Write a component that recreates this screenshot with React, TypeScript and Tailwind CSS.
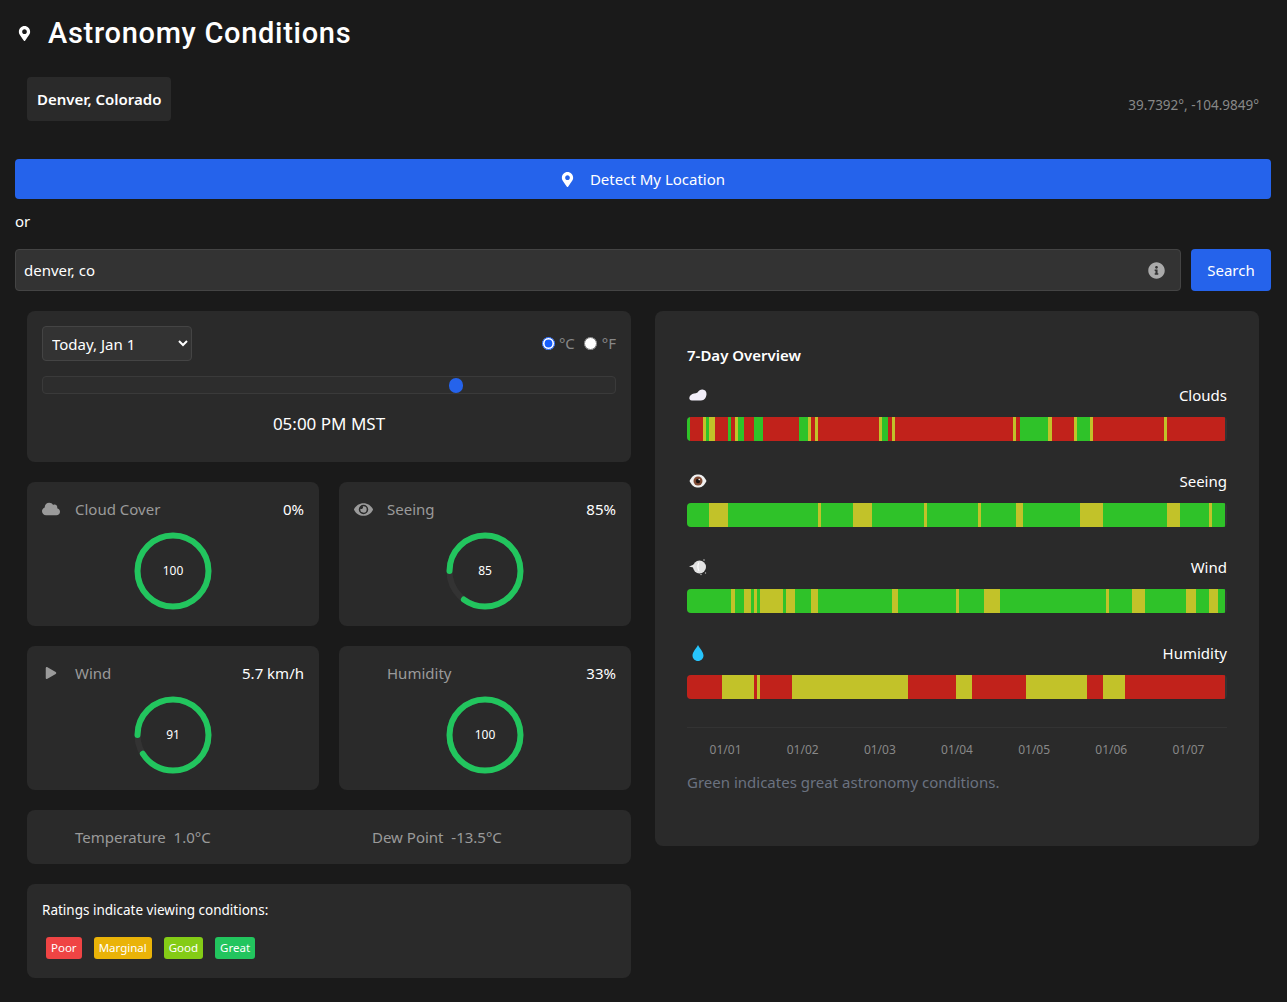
import React from 'react';
import { FaMapMarkerAlt, FaCloud, FaEye, FaPlay, FaInfoCircle } from 'react-icons/fa';

type Seg = [string, number];

const R = 'r';
const G = 'g';
const Y = 'y';

// bar runs are [colour, end x] taken along the 538px bar that starts at 687
const clouds: Seg[] = [[G,690],[R,703],[Y,706],[G,709],[Y,715],[R,728],[G,731],[R,735],[Y,738],[G,744],[R,754],[G,763],[R,799],[G,808],[Y,811],[R,815],[Y,818],[R,879],[Y,882],[G,888],[R,892],[Y,895],[R,1013],[Y,1016],[R,1020],[G,1048],[Y,1052],[R,1074],[Y,1077],[G,1090],[Y,1093],[R,1164],[Y,1167],[R,1225]];
const seeing: Seg[] = [[G,709],[Y,728],[G,818],[Y,821],[G,853],[Y,872],[G,924],[Y,927],[G,978],[Y,981],[G,1016],[Y,1023],[G,1080],[Y,1103],[G,1167],[Y,1180],[G,1209],[Y,1212],[G,1225]];
const wind: Seg[] = [[G,731],[Y,735],[G,744],[Y,751],[G,754],[Y,757],[G,760],[Y,783],[G,786],[Y,795],[G,811],[Y,818],[G,892],[Y,898],[G,956],[Y,959],[G,984],[Y,1000],[G,1106],[Y,1109],[G,1132],[Y,1145],[G,1186],[Y,1196],[G,1209],[Y,1218],[G,1225]];
const humidity: Seg[] = [[R,722],[Y,754],[R,757],[Y,760],[R,792],[Y,908],[R,956],[Y,972],[R,1026],[Y,1087],[R,1103],[Y,1125],[R,1225]];

const segClass: Record<string, string> = {
  r: 'bg-[#c1221b]',
  g: 'bg-[#2fc229]',
  y: 'bg-[#c2c229]',
};

const Bar: React.FC<{ runs: Seg[] }> = ({ runs }) => {
  let start = 687;
  return (
    <div className="h-6 w-full rounded-[4px] bg-[#333333] overflow-hidden flex pr-[2px]">
      {runs.map(([c, end], i) => {
        const w = end - start;
        start = end;
        return <div key={i} className={`h-full shrink-0 ${segClass[c]}`} style={{ width: w }} />;
      })}
    </div>
  );
};

const Ring: React.FC<{ value: number }> = ({ value }) => {
  const r = 35.5;
  const c = 2 * Math.PI * r;
  return (
    <div className="relative w-20 h-20 mx-auto">
      <svg viewBox="0 0 80 80" className="w-20 h-20 rotate-180">
        <circle cx="40" cy="40" r={r} fill="none" stroke="#333333" strokeWidth="6" />
        <circle
          cx="40"
          cy="40"
          r={r}
          fill="none"
          stroke="#22c55e"
          strokeWidth="6"
          strokeLinecap="round"
          strokeDasharray={`${(c * value) / 100} ${c}`}
        />
      </svg>
      <div className="absolute inset-0 flex items-center justify-center text-xs text-white">{value}</div>
    </div>
  );
};

const StatCard: React.FC<{ icon?: React.ReactNode; label: string; value: string; score: number }> = ({ icon, label, value, score }) => (
  <div className="bg-[#2a2a2a] rounded-lg p-[15px] h-36">
    <div className="flex items-center justify-between h-6 mb-[10px]">
      <div className="flex items-center text-[#9a9a9a]">
        <span className="w-[33px] flex items-center">{icon}</span>
        <span>{label}</span>
      </div>
      <span className="text-white">{value}</span>
    </div>
    <Ring value={score} />
  </div>
);

const CloudEmoji = () => (
  <svg viewBox="0 0 18 12" className="w-[18px] h-3">
    <path d="M3 11.5C0.8 11.5 0 10 0.4 8.5C0.8 6.6 2.6 5 5 4.6C6.2 4.4 7.4 4.2 8.5 3.6C9.8 1.4 11.5 0.4 13.5 0.5C16 0.6 17.6 2.4 17.5 5C17.4 8 15.6 11.5 12 11.5Z" fill="#f1edf8" />
  </svg>
);

const EyeEmoji = () => (
  <svg viewBox="0 0 18 14" className="w-[18px] h-[14px]">
    <path d="M0.5 7C3 1.5 6 0.5 9 0.5C12 0.5 15 1.5 17.5 7C15 12.5 12 13.5 9 13.5C6 13.5 3 12.5 0.5 7Z" fill="#f0f0f0" />
    <circle cx="9" cy="7" r="4.5" fill="#7f4a33" />
    <circle cx="9" cy="7" r="2.2" fill="#1b1210" />
    <circle cx="10.2" cy="5.6" r="0.8" fill="#ffffff" />
  </svg>
);

const WindEmoji = () => (
  <svg viewBox="0 0 18 18" className="w-[18px] h-[18px]">
    <circle cx="10.5" cy="9" r="6.5" fill="#e2e2e2" />
    <path d="M0 8.5L5 6.5L6 11L4 9.5Z" fill="#e8e8e8" />
    <path d="M10 4.5C8.5 6.5 8.5 11 10 13" stroke="#ffffff" strokeWidth="1.2" fill="none" />
    <circle cx="15" cy="2" r="0.8" fill="#bdbdbd" />
    <circle cx="16.5" cy="15" r="0.7" fill="#bdbdbd" />
    <circle cx="12" cy="16.5" r="0.7" fill="#bdbdbd" />
  </svg>
);

const DropEmoji = () => (
  <svg viewBox="0 0 12 16" className="w-3 h-4">
    <path d="M6 0C7.5 3 11.5 7 11.5 10.5C11.5 13.5 9 16 6 16C3 16 0.5 13.5 0.5 10.5C0.5 7 4.5 3 6 0Z" fill="#27c4fb" />
  </svg>
);

const Overview: React.FC<{ icon: React.ReactNode; label: string; runs: Seg[] }> = ({ icon, label, runs }) => (
  <div className="mb-[28px]">
    <div className="flex items-center justify-between h-6 mb-[10px] text-white">
      <span className="w-[22px] flex items-center justify-center">{icon}</span>
      <span>{label}</span>
    </div>
    <Bar runs={runs} />
  </div>
);

const Chip: React.FC<{ className: string; label: string }> = ({ className, label }) => (
  <span className={`h-[22px] px-[5px] flex items-center rounded-[3px] text-[11.5px] text-white ${className}`}>{label}</span>
);

const App: React.FC = () => {
  return (
    <div className="min-h-[1002px] bg-[#1a1a1a] text-white pl-[15px] pr-[16px] pb-6 font-['Noto_Sans','Open_Sans',sans-serif] text-[15px]">
      <header className="flex items-center pt-[2px] h-[64px]">
        <FaMapMarkerAlt className="w-[13px] h-[15px] ml-[3px] text-white" />
        <h1 className="ml-[17px] text-[29px] leading-none font-medium font-['Roboto',sans-serif] tracking-[0.7px]">Astronomy Conditions</h1>
      </header>

      <div className="flex items-center justify-between px-3 h-[44px] mt-[13px]">
        <div className="h-[44px] px-[10px] flex items-center bg-[#2a2a2a] rounded font-semibold">Denver, Colorado</div>
        <span className="text-[13.5px] text-[#888888] mt-3">39.7392°, -104.9849°</span>
      </div>

      <button className="mt-[38px] w-full h-10 bg-[#2563eb] rounded flex items-center justify-center text-white">
        <FaMapMarkerAlt className="w-[13px] h-[15px] mr-4" />
        Detect My Location
      </button>
      <p className="mt-[12px] h-5 leading-5">or</p>

      <div className="mt-[18px] flex gap-[10px]">
        <div className="flex-1 h-[42px] bg-[#333333] border border-[#444444] rounded flex items-center justify-between px-2">
          <span>denver, co</span>
          <FaInfoCircle className="w-[17px] h-[17px] mr-[7px] text-[#aaaaaa]" />
        </div>
        <button className="w-20 h-[42px] bg-[#2563eb] rounded text-white">Search</button>
      </div>

      <main className="mt-5 px-3 grid grid-cols-2 gap-6 items-start">
        <div className="flex flex-col gap-5">
          <section className="bg-[#2a2a2a] rounded-lg h-[151px] p-[15px]">
            <div className="flex items-center justify-between">
              <select className="w-[150px] h-[35px] bg-[#333333] border border-[#444444] rounded px-[5px] text-white" defaultValue="today">
                <option value="today">Today, Jan 1</option>
              </select>
              <div className="flex items-center text-[#888888]">
                <input type="radio" name="unit" defaultChecked className="accent-blue-600 w-[13px] h-[13px] mr-[4px]" />
                <span className="mr-[9px]">°C</span>
                <input type="radio" name="unit" className="w-[13px] h-[13px] mr-[5px]" />
                <span>°F</span>
              </div>
            </div>
            <div className="relative mt-[15px] h-[18px] bg-[#2d2d2d] border border-[#3a3a3a] rounded">
              <div className="absolute left-[406px] top-[0.5px] w-[14px] h-[15px] rounded-full bg-[#2563eb]" />
            </div>
            <div className="mt-[18px] text-center text-[17px] leading-6">05:00 PM MST</div>
          </section>

          <div className="grid grid-cols-2 gap-5">
            <StatCard icon={<FaCloud className="w-[18px] h-[18px]" />} label="Cloud Cover" value="0%" score={100} />
            <StatCard icon={<FaEye className="w-[19px] h-[19px]" />} label="Seeing" value="85%" score={85} />
            <StatCard icon={<FaPlay className="w-3 h-3 ml-[3px]" />} label="Wind" value="5.7 km/h" score={91} />
            <StatCard label="Humidity" value="33%" score={100} />
          </div>

          <section className="bg-[#2a2a2a] rounded-lg h-[54px] pl-[48px] flex items-center text-[#9a9a9a]">
            <span className="w-[297px]">Temperature&nbsp; 1.0°C</span>
            <span>Dew Point&nbsp; -13.5°C</span>
          </section>

          <section className="bg-[#2a2a2a] rounded-lg h-[94px] p-[15px]">
            <p className="text-[13.5px] leading-[24px] -mt-[1px]">Ratings indicate viewing conditions:</p>
            <div className="flex gap-3 ml-1 mt-[15px]">
              <Chip className="bg-[#ef4444]" label="Poor" />
              <Chip className="bg-[#eab308]" label="Marginal" />
              <Chip className="bg-[#84cc16]" label="Good" />
              <Chip className="bg-[#22c55e]" label="Great" />
            </div>
          </section>
        </div>

        <section className="bg-[#2a2a2a] rounded-lg h-[535px] pt-[32px] px-8">
          <h3 className="font-semibold leading-[24px] mb-[16px]">7-Day Overview</h3>
          <Overview icon={<CloudEmoji />} label="Clouds" runs={clouds} />
          <Overview icon={<EyeEmoji />} label="Seeing" runs={seeing} />
          <Overview icon={<WindEmoji />} label="Wind" runs={wind} />
          <Overview icon={<DropEmoji />} label="Humidity" runs={humidity} />
          <div className="border-t border-[#333333] pt-[14px] flex text-xs text-[#888888] w-[540px]">
            {['01/01', '01/02', '01/03', '01/04', '01/05', '01/06', '01/07'].map((d) => (
              <span key={d} className="flex-1 text-center">{d}</span>
            ))}
          </div>
          <p className="mt-[14px] text-[15px] leading-5 text-[#6b7280]">Green indicates great astronomy conditions.</p>
        </section>
      </main>
    </div>
  );
};

export default App;
